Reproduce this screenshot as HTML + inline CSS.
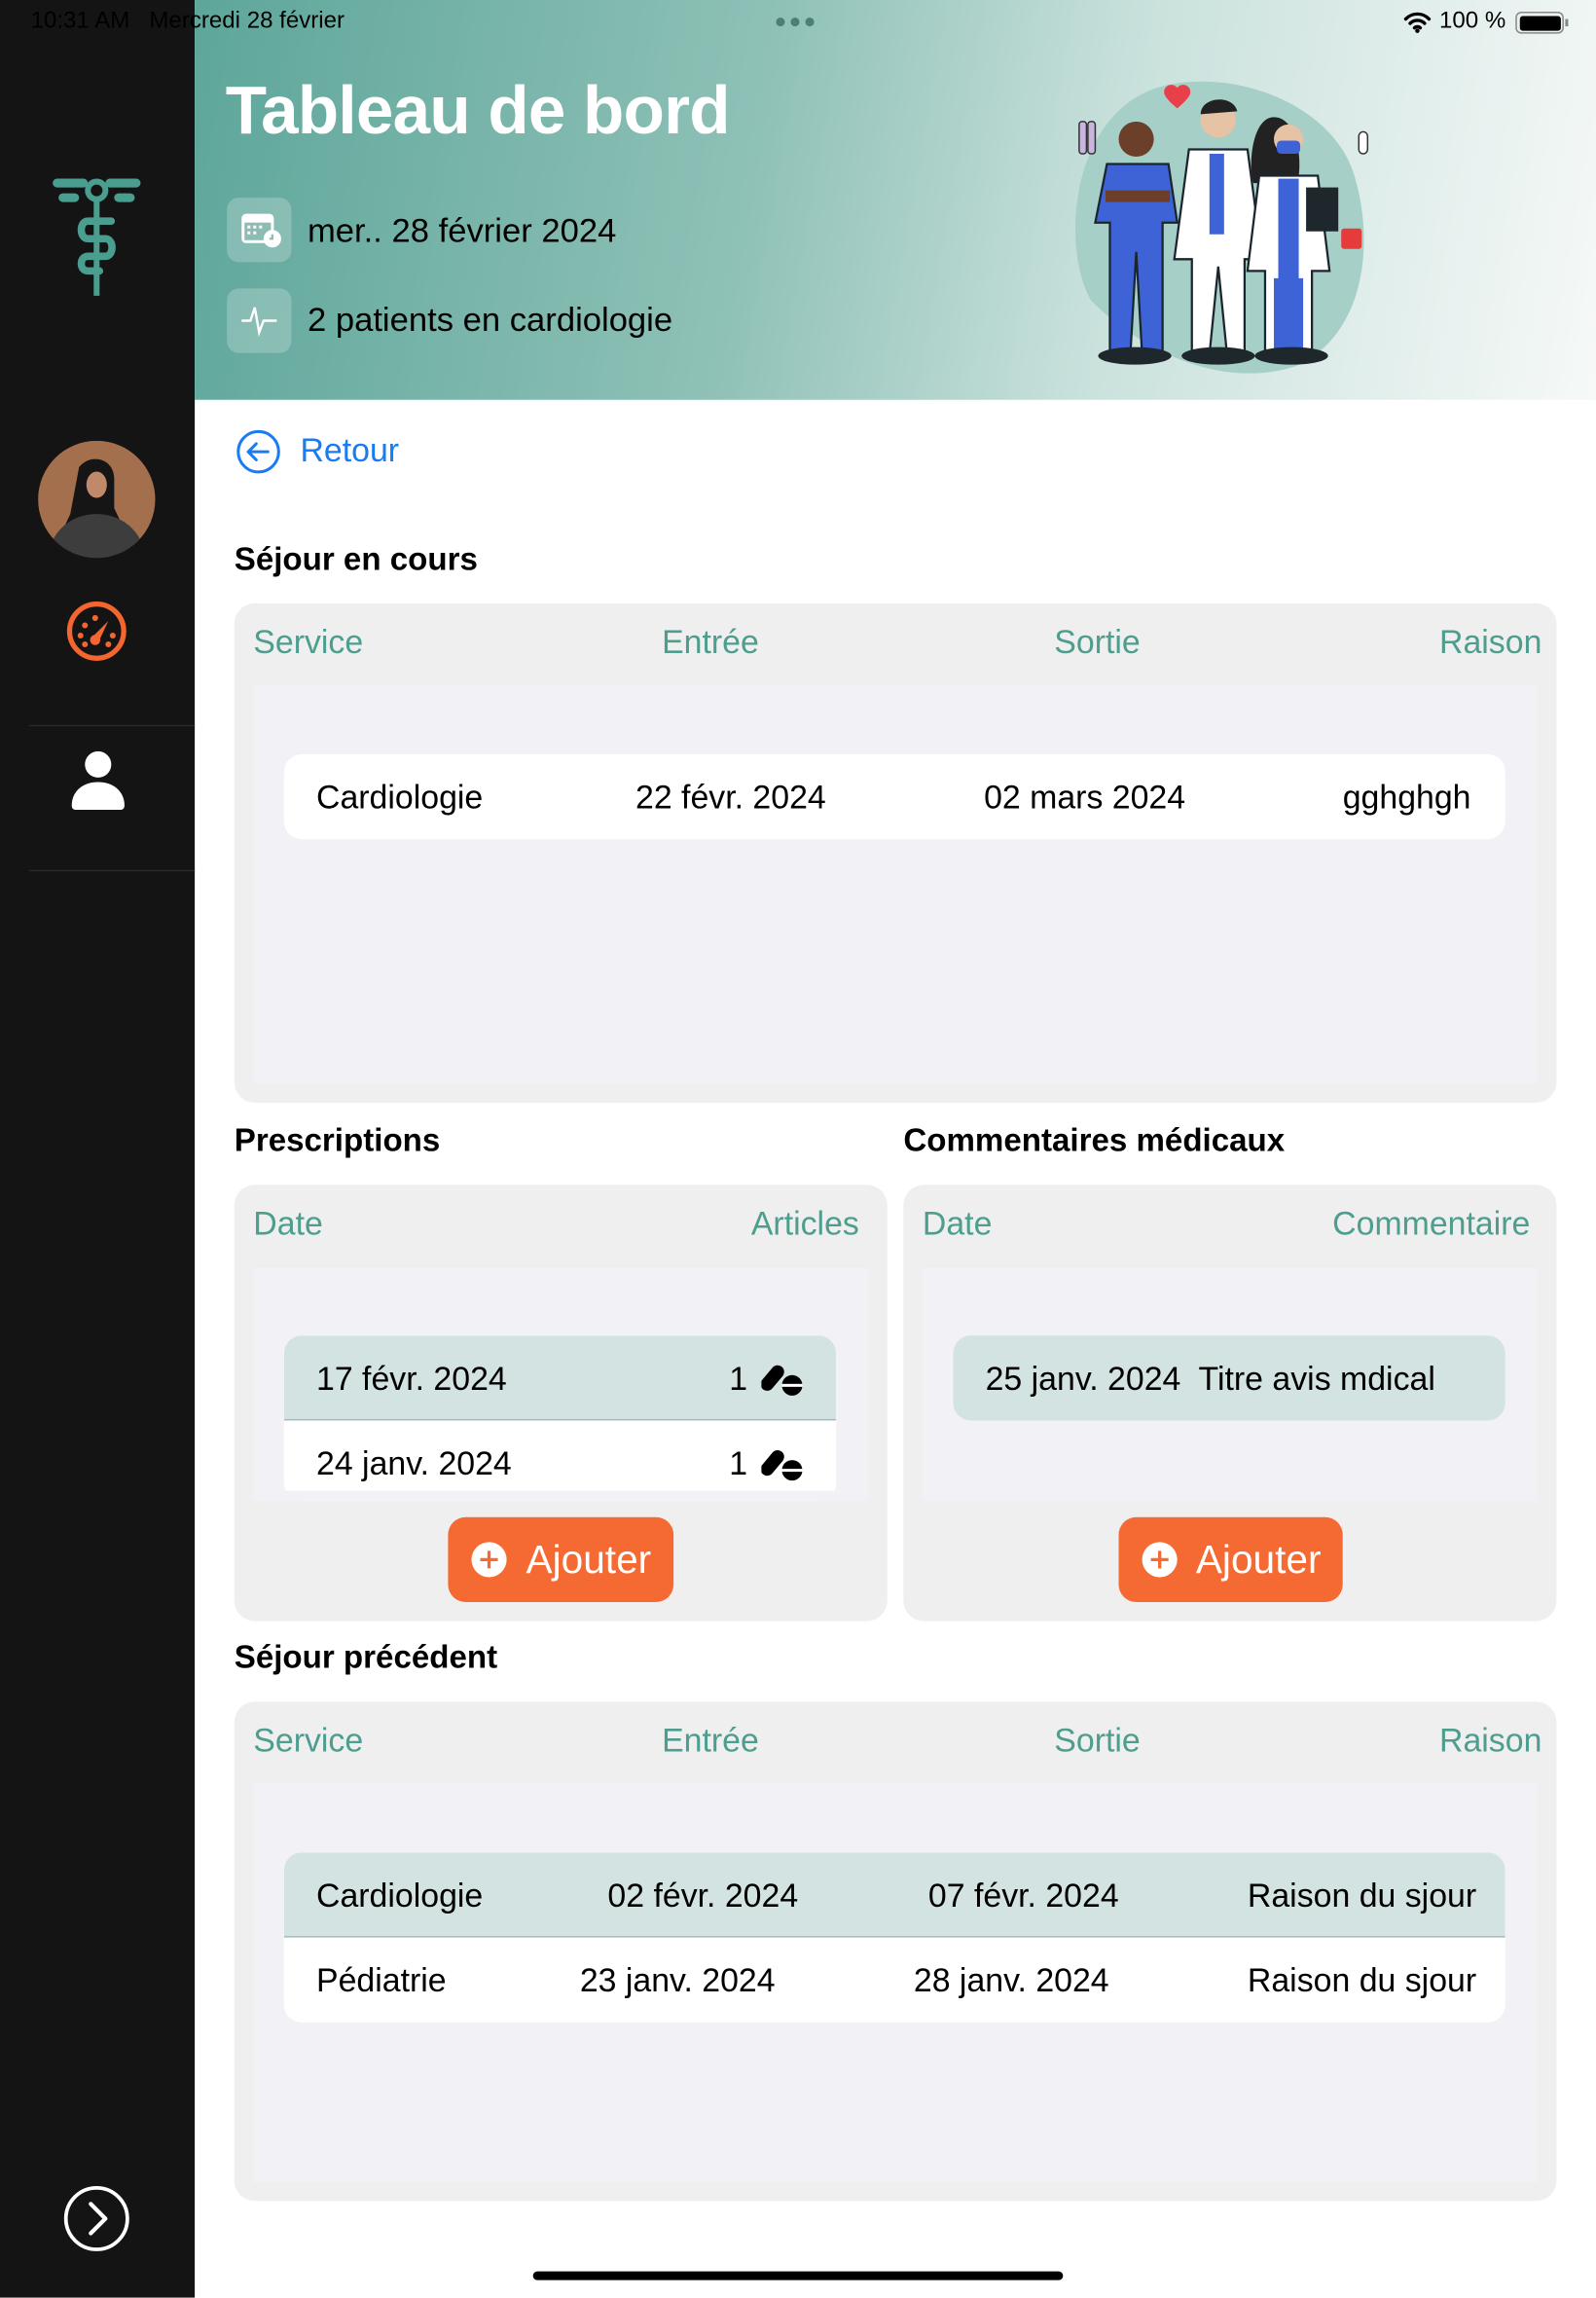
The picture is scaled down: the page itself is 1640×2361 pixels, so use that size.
<!DOCTYPE html>
<html><head><meta charset="utf-8">
<style>
*{margin:0;padding:0;box-sizing:border-box}
html,body{width:1640px;height:2360px;overflow:hidden;background:#fff}
#s{position:absolute;left:0;top:0;width:1090px;height:1569px;transform:scale(1.50459);transform-origin:0 0;font-family:"Liberation Sans",sans-serif;color:#000;overflow:hidden}
.a{position:absolute}
.t{position:absolute;font-size:22.5px;letter-spacing:0;white-space:nowrap;line-height:1}
.h{color:#4d9e8e}
.b{font-weight:bold;font-size:22px}
.card{position:absolute;background:#efefef;border-radius:14px}
.inner{position:absolute;background:#f2f2f6}
.btn{position:absolute;background:#f56a33;border-radius:12px;color:#fff;font-size:27px;display:flex;align-items:center;justify-content:center;gap:12px}
</style></head><body>
<div id="s">
<div class="a" style="left:0;top:0;width:133px;height:1569px;background:#141414"></div>
<div class="a" style="left:133px;top:0;width:957px;height:273px;background:linear-gradient(100deg,#5ea69a 0%,#8fc1b7 40%,#c9e1dc 65%,#f6f9f8 100%)"></div>
<div class="t" style="left:21px;top:7px;font-size:16px;color:#000">10:31 AM&nbsp;&nbsp;&nbsp;Mercredi 28 février</div>
<div class="a" style="left:530px;top:12px;width:30px;height:6px;display:flex;gap:4px"><span style="width:6px;height:6px;border-radius:3px;background:#4d7f76"></span><span style="width:6px;height:6px;border-radius:3px;background:#4d7f76"></span><span style="width:6px;height:6px;border-radius:3px;background:#4d7f76"></span></div>
<svg class="a" style="left:958px;top:7px" width="20" height="16" viewBox="0 0 20 16"><path d="M2 6a11 11 0 0 1 16 0M5 9a7 7 0 0 1 10 0M8 12a3 3 0 0 1 4 0" stroke="#000" stroke-width="2.2" fill="none" stroke-linecap="round"/><circle cx="10" cy="14" r="1.5"/></svg>
<div class="t" style="left:983px;top:7px;font-size:16px">100 %</div>
<div class="a" style="left:1035px;top:8px;width:33px;height:15px;border:1.5px solid #888;border-radius:4px;padding:1.5px"><div style="width:100%;height:100%;background:#000;border-radius:2px"></div></div>
<div class="a" style="left:1069px;top:13px;width:2px;height:5px;background:#888"></div>

<div class="t" style="left:154px;top:52px;font-size:46px;font-weight:bold;color:#fff;letter-spacing:-0.5px">Tableau de bord</div>
<div class="a" style="left:155px;top:135px;width:44px;height:44px;border-radius:8px;background:rgba(255,255,255,0.22)"></div>
<svg class="a" style="left:163px;top:143px" width="30" height="30" viewBox="0 0 30 30"><rect x="2" y="3" width="22" height="20" rx="3" fill="#fff"/><rect x="4" y="9" width="18" height="12" fill="#8cbcb3"/><g fill="#fff"><rect x="6" y="11" width="2" height="2"/><rect x="10" y="11" width="2" height="2"/><rect x="14" y="11" width="2" height="2"/><rect x="6" y="15" width="2" height="2"/><rect x="10" y="15" width="2" height="2"/></g><circle cx="23" cy="20" r="6" fill="#fff"/><path d="M23 17v3h-2" stroke="#8cbcb3" stroke-width="1.5" fill="none"/></svg>
<div class="t" style="left:210px;top:146px;font-size:23px">mer.. 28 février 2024</div>
<div class="a" style="left:155px;top:197px;width:44px;height:44px;border-radius:8px;background:rgba(255,255,255,0.22)"></div>
<svg class="a" style="left:163px;top:205px" width="28" height="28" viewBox="0 0 28 28"><path d="M2 14h6l3-9 3 17 3-8h9" stroke="#fff" stroke-width="1.6" fill="none"/></svg>
<div class="t" style="left:210px;top:207px;font-size:23px">2 patients en cardiologie</div>

<svg class="a" style="left:720px;top:50px" width="220" height="205" viewBox="0 0 220 205">
<path d="M70 10c50-15 120 10 135 60 15 50 5 110-40 130-45 15-100-5-140-45C5 120 10 30 70 10z" fill="#a6cfc7"/>
<circle cx="56" cy="45" r="12" fill="#6b3f2a"/>
<path d="M36 62h42l6 40-10 0v90h-14l-4-70-4 70H38v-90H28z" fill="#3d63d6" stroke="#1b2530" stroke-width="1.5"/>
<rect x="35" y="80" width="44" height="8" fill="#6b3f2a"/>
<ellipse cx="55" cy="193" rx="25" ry="6" fill="#1e272c"/>
<circle cx="112" cy="32" r="12" fill="#e7c3a5"/><path d="M100 28c0-12 22-14 25-2" fill="#222"/>
<path d="M92 52h40l10 75-12 0v65h-12l-6-60-6 60H94v-65H82z" fill="#fff" stroke="#1b2530" stroke-width="1.5"/>
<rect x="106" y="55" width="10" height="55" fill="#3d63d6"/>
<ellipse cx="112" cy="193" rx="25" ry="6" fill="#1e272c"/>
<path d="M150 30c-14 0-18 30-14 45h30c4-15 0-45-16-45z" fill="#222"/>
<circle cx="160" cy="45" r="10" fill="#e7c3a5"/><rect x="152" y="46" width="16" height="9" rx="3" fill="#3d63d6"/>
<path d="M140 70h40l8 65h-12v57h-10l-6-60-6 60h-10v-57h-12z" fill="#fff" stroke="#1b2530" stroke-width="1.5"/>
<rect x="153" y="72" width="14" height="70" fill="#3d63d6"/><rect x="150" y="140" width="20" height="50" fill="#3d63d6"/>
<rect x="172" y="78" width="22" height="30" fill="#1e272c"/>
<ellipse cx="162" cy="193" rx="25" ry="6" fill="#1e272c"/>
<path d="M84 10c-3-4-9-2-9 3 0 4 9 11 9 11s9-7 9-11c0-5-6-7-9-3z" fill="#e8404a"/>
<rect x="17" y="33" width="5" height="22" rx="2" fill="#c9b5dd" stroke="#333"/><rect x="23" y="33" width="5" height="22" rx="2" fill="#c9b5dd" stroke="#333"/>
<rect x="196" y="106" width="14" height="14" rx="2" fill="#e63b3b"/>
<rect x="208" y="40" width="6" height="15" rx="3" fill="#fff" stroke="#333"/>
</svg>

<svg class="a" style="left:34px;top:118px" width="64" height="86" viewBox="0 0 64 86"><g fill="#4a9e90"><rect x="2" y="4" width="24" height="6" rx="3"/><rect x="38" y="4" width="24" height="6" rx="3"/><rect x="6" y="14" width="14" height="6" rx="3"/><rect x="44" y="14" width="14" height="6" rx="3"/></g><circle cx="32" cy="12" r="6" fill="none" stroke="#4a9e90" stroke-width="4"/><path d="M32 18v66" stroke="#4a9e90" stroke-width="4"/><path d="M42 33H26c-6 0-6 12 0 12h12c6 0 6 12 0 12H26c-6 0-6 10 0 10h8" stroke="#4a9e90" stroke-width="5" fill="none" stroke-linecap="round"/></svg>
<svg class="a" style="left:26px;top:301px" width="80" height="80" viewBox="0 0 80 80"><defs><clipPath id="c"><circle cx="40" cy="40" r="40"/></clipPath></defs><g clip-path="url(#c)"><rect width="80" height="80" fill="#a36f4d"/><path d="M28 18c8-10 24-6 24 8v20l16 34H8l14-30z" fill="#151515"/><ellipse cx="40" cy="30" rx="7" ry="9" fill="#c08a6a"/><path d="M6 80c4-22 20-30 34-30s30 8 34 30z" fill="#3d3d3d"/></g></svg>
<svg class="a" style="left:45px;top:410px" width="42" height="42" viewBox="0 0 42 42"><circle cx="21" cy="21" r="18.5" fill="none" stroke="#f5652f" stroke-width="3.5"/><g fill="#f5652f"><circle cx="13" cy="17" r="2"/><circle cx="20" cy="12" r="2"/><circle cx="10" cy="24" r="2"/><circle cx="32" cy="24" r="2"/><circle cx="13" cy="30" r="2"/><circle cx="29" cy="30" r="2"/><path d="M17 26l12-12-7 15z"/><circle cx="20" cy="27" r="3.5"/></g></svg>
<div class="a" style="left:20px;top:495px;width:113px;height:1px;background:#2a2a2a"></div>
<div class="a" style="left:20px;top:594px;width:113px;height:1px;background:#2a2a2a"></div>
<svg class="a" style="left:48px;top:512px" width="38" height="42" viewBox="0 0 38 42"><circle cx="19" cy="10" r="9" fill="#fff"/><path d="M1 38c0-10 8-16 18-16s18 6 18 16c0 2-1 3-3 3H4c-2 0-3-1-3-3z" fill="#fff"/></svg>
<svg class="a" style="left:43px;top:1492px" width="46" height="46" viewBox="0 0 46 46"><circle cx="23" cy="23" r="21" fill="none" stroke="#fff" stroke-width="2.5"/><path d="M19 13l10 10-10 10" stroke="#fff" stroke-width="2.8" fill="none" stroke-linecap="round" stroke-linejoin="round"/></svg>

<svg class="a" style="left:161px;top:293px" width="31" height="31" viewBox="0 0 31 31"><circle cx="15.5" cy="15.5" r="13.8" fill="none" stroke="#1a7cf2" stroke-width="2"/><path d="M22 15.5H9M14 10l-5.5 5.5L14 21" stroke="#1a7cf2" stroke-width="2" fill="none" stroke-linecap="round" stroke-linejoin="round"/></svg>
<div class="t" style="left:205px;top:297px;color:#1a7cf2">Retour</div>

<div class="t b" style="left:160px;top:371px">Séjour en cours</div>
<div class="card" style="left:160px;top:412px;width:903px;height:341px"></div>
<div class="t h" style="left:173px;top:428px">Service</div>
<div class="t h" style="left:452px;top:428px">Entrée</div>
<div class="t h" style="left:720px;top:428px">Sortie</div>
<div class="t h" style="left:983px;top:428px">Raison</div>
<div class="inner" style="left:173px;top:468px;width:877px;height:272px"></div>
<div class="a" style="left:194px;top:515px;width:834px;height:58px;background:#fff;border-radius:12px"></div>
<div class="t" style="left:216px;top:534px">Cardiologie</div>
<div class="t" style="left:434px;top:534px">22 févr. 2024</div>
<div class="t" style="left:672px;top:534px">02 mars 2024</div>
<div class="t" style="left:917px;top:534px">gghghgh</div>

<div class="t b" style="left:160px;top:768px">Prescriptions</div>
<div class="card" style="left:160px;top:809px;width:446px;height:298px"></div>
<div class="t h" style="left:173px;top:825px">Date</div>
<div class="t h" style="left:513px;top:825px">Articles</div>
<div class="inner" style="left:173px;top:866px;width:420px;height:159px"></div>
<div class="a" style="left:194px;top:912px;width:377px;height:113px;border-radius:12px;overflow:hidden;background:#fff">
<div style="height:58px;background:#d3e3e2;border-bottom:1px solid #a8b9bc"></div></div>
<div class="a" style="left:194px;top:1018px;width:377px;height:7px;background:#f2f2f6"></div>
<div class="t" style="left:216px;top:931px">17 févr. 2024</div>
<div class="t" style="left:498px;top:931px">1</div>
<div class="t" style="left:216px;top:989px">24 janv. 2024</div>
<div class="t" style="left:498px;top:989px">1</div>
<svg class="a" style="left:520px;top:929px" width="30" height="26" viewBox="0 0 30 26"><rect x="3" y="2" width="9" height="20" rx="4.5" transform="rotate(40 7.5 12)" fill="#000"/><circle cx="21" cy="17" r="7" fill="#000"/><rect x="14" y="16" width="14" height="2" fill="#fff"/></svg>
<svg class="a" style="left:520px;top:987px" width="30" height="26" viewBox="0 0 30 26"><rect x="3" y="2" width="9" height="20" rx="4.5" transform="rotate(40 7.5 12)" fill="#000"/><circle cx="21" cy="17" r="7" fill="#000"/><rect x="14" y="16" width="14" height="2" fill="#fff"/></svg>
<div class="btn" style="left:306px;top:1036px;width:154px;height:58px"><svg width="26" height="26" viewBox="0 0 26 26"><circle cx="13" cy="13" r="12" fill="#fff"/><path d="M13 7v12M7 13h12" stroke="#f56a33" stroke-width="2.2"/></svg><span>Ajouter</span></div>

<div class="t b" style="left:617px;top:768px">Commentaires médicaux</div>
<div class="card" style="left:617px;top:809px;width:446px;height:298px"></div>
<div class="t h" style="left:630px;top:825px">Date</div>
<div class="t h" style="left:910px;top:825px">Commentaire</div>
<div class="inner" style="left:630px;top:866px;width:420px;height:159px"></div>
<div class="a" style="left:651px;top:912px;width:377px;height:58px;background:#d3e3e2;border-radius:12px"></div>
<div class="t" style="left:673px;top:931px">25 janv. 2024&nbsp; Titre avis mdical</div>
<div class="btn" style="left:764px;top:1036px;width:153px;height:58px"><svg width="26" height="26" viewBox="0 0 26 26"><circle cx="13" cy="13" r="12" fill="#fff"/><path d="M13 7v12M7 13h12" stroke="#f56a33" stroke-width="2.2"/></svg><span>Ajouter</span></div>

<div class="t b" style="left:160px;top:1121px">Séjour précédent</div>
<div class="card" style="left:160px;top:1162px;width:903px;height:341px"></div>
<div class="t h" style="left:173px;top:1178px">Service</div>
<div class="t h" style="left:452px;top:1178px">Entrée</div>
<div class="t h" style="left:720px;top:1178px">Sortie</div>
<div class="t h" style="left:983px;top:1178px">Raison</div>
<div class="inner" style="left:173px;top:1218px;width:877px;height:272px"></div>
<div class="a" style="left:194px;top:1265px;width:834px;height:116px;border-radius:12px;overflow:hidden;background:#fff">
<div style="height:58px;background:#d3e3e2;border-bottom:1px solid #a8b9bc"></div></div>
<div class="t" style="left:216px;top:1284px">Cardiologie</div>
<div class="t" style="left:415px;top:1284px">02 févr. 2024</div>
<div class="t" style="left:634px;top:1284px">07 févr. 2024</div>
<div class="t" style="left:852px;top:1284px">Raison du sjour</div>
<div class="t" style="left:216px;top:1342px">Pédiatrie</div>
<div class="t" style="left:396px;top:1342px">23 janv. 2024</div>
<div class="t" style="left:624px;top:1342px">28 janv. 2024</div>
<div class="t" style="left:852px;top:1342px">Raison du sjour</div>

<div class="a" style="left:364px;top:1551px;width:362px;height:6px;border-radius:3px;background:#000"></div>
</div>
</body></html>
